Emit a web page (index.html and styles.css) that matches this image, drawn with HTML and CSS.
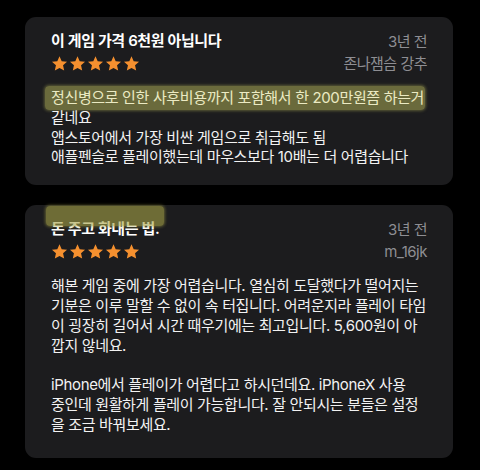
FILE: index.html
```html
<!doctype html>
<html lang="ko">
  <head>
    <meta charset="UTF-8" />
    <meta name="viewport" content="width=device-width, initial-scale=1.0" />
    <title>리뷰</title>
    <link rel="stylesheet" href="styles.css">
  </head>
  <body>
    <div class="reviews">
      <div class="card">
        <div class="card-head">
          <div>
            <h3 class="title">이 게임 가격 6천원 아닙니다</h3>
            <div class="stars">
              <svg viewBox="0 0 24 24"><path d="M12 1.8l3.1 6.9 7.5.8-5.6 5.1 1.6 7.4L12 18.2 5.4 22l1.6-7.4-5.6-5.1 7.5-.8z"/></svg>
              <svg viewBox="0 0 24 24"><path d="M12 1.8l3.1 6.9 7.5.8-5.6 5.1 1.6 7.4L12 18.2 5.4 22l1.6-7.4-5.6-5.1 7.5-.8z"/></svg>
              <svg viewBox="0 0 24 24"><path d="M12 1.8l3.1 6.9 7.5.8-5.6 5.1 1.6 7.4L12 18.2 5.4 22l1.6-7.4-5.6-5.1 7.5-.8z"/></svg>
              <svg viewBox="0 0 24 24"><path d="M12 1.8l3.1 6.9 7.5.8-5.6 5.1 1.6 7.4L12 18.2 5.4 22l1.6-7.4-5.6-5.1 7.5-.8z"/></svg>
              <svg viewBox="0 0 24 24"><path d="M12 1.8l3.1 6.9 7.5.8-5.6 5.1 1.6 7.4L12 18.2 5.4 22l1.6-7.4-5.6-5.1 7.5-.8z"/></svg>
            </div>
          </div>
          <div class="meta">
            <span>3년 전</span>
            <span>존나잼슴 강추</span>
          </div>
        </div>
        <p class="body"><span class="mark">정신병으로 인한 사후비용까지 포함해서 한 200만원쯤 하는거</span>
같네요
앱스토어에서 가장 비싼 게임으로 취급해도 됨
애플펜슬로 플레이했는데 마우스보다 10배는 더 어렵습니다</p>
      </div>

      <div class="card">
        <div class="title-mark"></div>
        <div class="card-head">
          <div>
            <h3 class="title">돈 주고 화내는 법.</h3>
            <div class="stars">
              <svg viewBox="0 0 24 24"><path d="M12 1.8l3.1 6.9 7.5.8-5.6 5.1 1.6 7.4L12 18.2 5.4 22l1.6-7.4-5.6-5.1 7.5-.8z"/></svg>
              <svg viewBox="0 0 24 24"><path d="M12 1.8l3.1 6.9 7.5.8-5.6 5.1 1.6 7.4L12 18.2 5.4 22l1.6-7.4-5.6-5.1 7.5-.8z"/></svg>
              <svg viewBox="0 0 24 24"><path d="M12 1.8l3.1 6.9 7.5.8-5.6 5.1 1.6 7.4L12 18.2 5.4 22l1.6-7.4-5.6-5.1 7.5-.8z"/></svg>
              <svg viewBox="0 0 24 24"><path d="M12 1.8l3.1 6.9 7.5.8-5.6 5.1 1.6 7.4L12 18.2 5.4 22l1.6-7.4-5.6-5.1 7.5-.8z"/></svg>
              <svg viewBox="0 0 24 24"><path d="M12 1.8l3.1 6.9 7.5.8-5.6 5.1 1.6 7.4L12 18.2 5.4 22l1.6-7.4-5.6-5.1 7.5-.8z"/></svg>
            </div>
          </div>
          <div class="meta">
            <span>3년 전</span>
            <span>m_16jk</span>
          </div>
        </div>
        <p class="body">해본 게임 중에 가장 어렵습니다. 열심히 도달했다가 떨어지는
기분은 이루 말할 수 없이 속 터집니다. 어려운지라 플레이 타임
이 굉장히 길어서 시간 때우기에는 최고입니다. 5,600원이 아
깝지 않네요.

iPhone에서 플레이가 어렵다고 하시던데요. iPhoneX 사용
중인데 원활하게 플레이 가능합니다. 잘 안되시는 분들은 설정
을 조금 바꿔보세요.</p>
      </div>
    </div>
  </body>
</html>
```

FILE: styles.css
```css
* {
  margin: 0;
  padding: 0;
  box-sizing: border-box;
  font-family: Inter, "Noto Sans CJK KR", sans-serif;
}

body {
  background-color: #000000;
  color: #ffffff;
  padding: 17px 27px 0 25px;
}

.reviews {
  display: flex;
  flex-direction: column;
  gap: 20px;
}

.card {
  position: relative;
  background: #1c1c1e;
  border-radius: 11px;
  padding: 14px 26px 18px;
}

.card:last-child {
  padding-bottom: 23px;
}

.card-head {
  display: flex;
  justify-content: space-between;
  align-items: flex-start;
}

.title {
  font-size: 15px;
  font-weight: 600;
  line-height: 20px;
  letter-spacing: -0.4px;
  color: #ffffff;
}

.stars {
  display: flex;
  gap: 1px;
  margin-top: 2px;
  height: 20px;
  align-items: center;
}

.stars svg {
  width: 17px;
  height: 17px;
  fill: #f5902f;
}

.meta {
  display: flex;
  flex-direction: column;
  align-items: flex-end;
  font-size: 15px;
  line-height: 22px;
  letter-spacing: -0.5px;
  color: #8e8e93;
}

.body {
  margin-top: 13px;
  font-size: 15px;
  line-height: 19.8px;
  letter-spacing: -0.35px;
  color: #f2f2f2;
  white-space: pre-line;
}

/* 형광펜 표시 */
.mark {
  background: #6a6a3c;
  color: #ebeac3;
  padding: 2px 1px 3px 6px;
  margin-left: -6px;
  border-radius: 4px;
  box-shadow: 0 0 3px 1px rgba(106, 106, 60, 0.8);
}

.title-mark {
  position: absolute;
  left: 21px;
  top: 1px;
  width: 118px;
  height: 20px;
  border-radius: 4px;
  background: rgba(165, 162, 70, 0.6);
  box-shadow: 0 0 3px 1px rgba(165, 162, 70, 0.5);
}
```
